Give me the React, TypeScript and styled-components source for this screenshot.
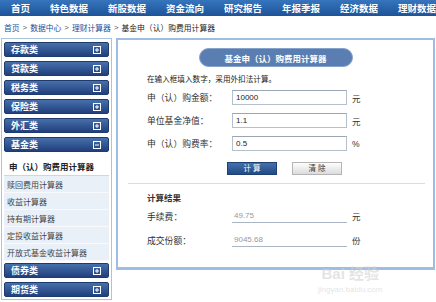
import React from 'react';
import styled, { createGlobalStyle } from 'styled-components';

const GlobalStyle = createGlobalStyle`
  body {
    margin: 0;
    background: #fff;
    font-family: "Liberation Sans", "Noto Sans CJK SC", sans-serif;
  }
`;

const navItems = ['首页', '特色数据', '新股数据', '资金流向', '研究报告', '年报季报', '经济数据', '理财数据'];
const topGroups = ['存款类', '贷款类', '税务类', '保险类', '外汇类'];
const fundItems = ['赎回费用计算器', '收益计算器', '持有期计算器', '定投收益计算器', '开放式基金收益计算器'];

const fields = [
  { label: '申（认）购金额：', value: '10000', unit: '元' },
  { label: '单位基金净值：', value: '1.1', unit: '元' },
  { label: '申（认）购费率：', value: '0.5', unit: '%' },
];

const results = [
  { label: '手续费：', value: '49.75', unit: '元' },
  { label: '成交份额：', value: '9045.68', unit: '份' },
];

const ToggleIcon = ({ open }: { open?: boolean }) => (
  <svg width="8" height="8" viewBox="0 0 8 8">
    <rect x="0.5" y="0.5" width="7" height="7" fill="none" stroke="#fff" strokeWidth="1" />
    <line x1="2" y1="4" x2="6" y2="4" stroke="#fff" strokeWidth="1" />
    {!open && <line x1="4" y1="2" x2="4" y2="6" stroke="#fff" strokeWidth="1" />}
  </svg>
);

export default function App() {
  return (
    <Page>
      <GlobalStyle />
      <TopNav>
        {navItems.map((item) => (
          <NavItem key={item}>{item}</NavItem>
        ))}
      </TopNav>

      <Breadcrumb>
        <Crumb>首页</Crumb>
        <Sep>&gt;</Sep>
        <Crumb>数据中心</Crumb>
        <Sep>&gt;</Sep>
        <Crumb>理财计算器</Crumb>
        <Sep>&gt;</Sep>
        <Current>基金申（认）购费用计算器</Current>
      </Breadcrumb>

      <Content>
        <Sidebar>
          {topGroups.map((g) => (
            <GroupBar key={g}>
              {g}
              <ToggleIcon />
            </GroupBar>
          ))}
          <GroupBar>
            基金类
            <ToggleIcon open />
          </GroupBar>
          <SubMenu>
            <SubItem active>申（认）购费用计算器</SubItem>
            {fundItems.map((item) => (
              <SubItem key={item}>{item}</SubItem>
            ))}
          </SubMenu>
          <GroupBar>
            债券类
            <ToggleIcon />
          </GroupBar>
          <GroupBar>
            期货类
            <ToggleIcon />
          </GroupBar>
        </Sidebar>

        <Panel>
          <TitlePill>基金申（认）购费用计算器</TitlePill>
          <Hint>在输入框填入数字，采用外扣法计算。</Hint>

          {fields.map((f) => (
            <FormRow key={f.label}>
              <Label>{f.label}</Label>
              <Input defaultValue={f.value} />
              <Unit>{f.unit}</Unit>
            </FormRow>
          ))}

          <ButtonRow>
            <Button primary>计 算</Button>
            <Button>清 除</Button>
          </ButtonRow>

          <Divider />

          <SectionTitle>计算结果</SectionTitle>
          {results.map((r) => (
            <ResultRow key={r.label}>
              <Label>{r.label}</Label>
              <ResultValue>{r.value}</ResultValue>
              <Unit>{r.unit}</Unit>
            </ResultRow>
          ))}
        </Panel>
      </Content>

      <Watermark>
        <WatermarkLogo>Bai 经验</WatermarkLogo>
        <WatermarkUrl>jingyan.baidu.com</WatermarkUrl>
      </Watermark>
    </Page>
  );
}

const Page = styled.div`
  position: relative;
  width: 436px;
  height: 302px;
  overflow: hidden;
`;

const TopNav = styled.div`
  display: flex;
  align-items: center;
  gap: 20px;
  height: 16px;
  padding-left: 11px;
  background: linear-gradient(#3675bd, #1d5399);
  white-space: nowrap;
`;

const NavItem = styled.span`
  color: #fff;
  font-size: 9.5px;
  font-weight: bold;
`;

const Breadcrumb = styled.div`
  display: flex;
  align-items: center;
  height: 22px;
  padding-left: 4px;
  font-size: 7.8px;
  white-space: nowrap;
`;

const Crumb = styled.span`
  color: #1d4f9a;
`;

const Sep = styled.span`
  color: #555;
  margin: 0 3px;
`;

const Current = styled.span`
  color: #222;
`;

const Content = styled.div`
  display: flex;
  align-items: flex-start;
  gap: 4px;
  padding-left: 1px;
`;

const Sidebar = styled.div`
  box-sizing: border-box;
  width: 111px;
  height: 262px;
  padding: 3px 2px;
  border: 1px solid #a9c3e1;
`;

const GroupBar = styled.div`
  box-sizing: border-box;
  display: flex;
  align-items: center;
  justify-content: space-between;
  height: 15px;
  margin-bottom: 4px;
  padding: 0 7px 0 6px;
  background: linear-gradient(#4670ab, #213f7c);
  border: 1px solid #1d3b6f;
  border-radius: 2px;
  color: #fff;
  font-size: 9px;
  font-weight: bold;

  &:last-child {
    margin-bottom: 0;
  }
`;

const SubMenu = styled.div`
  margin-bottom: 2px;
  background: #eaf0f7;
`;

const SubItem = styled.div<{ active?: boolean }>`
  box-sizing: border-box;
  display: flex;
  align-items: center;
  height: ${({ active }) => (active ? '20px' : '17px')};
  padding-left: ${({ active }) => (active ? '5px' : '3px')};
  background: ${({ active }) => (active ? '#fff' : 'transparent')};
  border-bottom: 1px solid ${({ active }) => (active ? '#c9d7e8' : '#f7f9fc')};
  color: ${({ active }) => (active ? '#222' : '#444')};
  font-size: ${({ active }) => (active ? '8.5px' : '8px')};
  font-weight: ${({ active }) => (active ? 'bold' : 'normal')};
  white-space: nowrap;
`;

const Panel = styled.div`
  box-sizing: border-box;
  width: 319px;
  height: 232px;
  border: 2px solid #9fbde2;
  border-bottom-width: 3px;
  padding-top: 8px;
`;

const TitlePill = styled.div`
  box-sizing: border-box;
  display: flex;
  align-items: center;
  justify-content: center;
  width: 154px;
  height: 19px;
  margin: 0 auto;
  background: #5a7eb1;
  border: 1px solid #86a3cb;
  border-radius: 10px;
  color: #fff;
  font-size: 8.5px;
  font-weight: bold;
`;

const Hint = styled.div`
  height: 12px;
  line-height: 12px;
  margin: 7px 0 0 29px;
  color: #222;
  font-size: 7.6px;
`;

const FormRow = styled.div`
  display: grid;
  grid-template-columns: 80px 115px auto;
  column-gap: 5px;
  align-items: center;
  height: 23px;
  padding-left: 29px;

  &:first-of-type {
    margin-top: 11px;
  }
`;

const Label = styled.span`
  color: #333;
  font-size: 8.8px;
  white-space: nowrap;
`;

const Input = styled.input`
  box-sizing: border-box;
  width: 115px;
  height: 15px;
  margin: 0;
  padding: 0 3px;
  border: 1px solid #b5c0cd;
  border-top-color: #9aa6b4;
  background: #fff;
  color: #222;
  font-family: "Liberation Sans", sans-serif;
  font-size: 8px;
  outline: none;
`;

const Unit = styled.span`
  color: #333;
  font-size: 8.5px;
`;

const ButtonRow = styled.div`
  display: flex;
  gap: 15px;
  margin: 7px 0 0 109px;
`;

const Button = styled.button<{ primary?: boolean }>`
  box-sizing: border-box;
  width: 50px;
  height: 13px;
  padding: 0;
  background: ${({ primary }) => (primary ? 'linear-gradient(#4470ac, #214b87)' : 'linear-gradient(#fdfdfd, #dcdcdc)')};
  border: 1px solid ${({ primary }) => (primary ? '#1d3f72' : '#b4b4b4')};
  color: ${({ primary }) => (primary ? '#fff' : '#333')};
  font-family: "Liberation Sans", "Noto Sans CJK SC", sans-serif;
  font-size: 7.5px;
  line-height: 11px;
`;

const Divider = styled.div`
  height: 1px;
  margin: 8px 8px 0 10px;
  background: #dcdcdc;
`;

const SectionTitle = styled.div`
  height: 12px;
  line-height: 12px;
  margin: 8px 0 0 29px;
  color: #333;
  font-size: 8.5px;
  font-weight: bold;
`;

const ResultRow = styled.div`
  display: grid;
  grid-template-columns: 80px 115px auto;
  column-gap: 5px;
  align-items: center;
  height: 24px;
  padding-left: 29px;

  &:first-of-type {
    margin-top: 4px;
  }
`;

const ResultValue = styled.span`
  box-sizing: border-box;
  height: 14px;
  line-height: 13px;
  padding-left: 2px;
  border-bottom: 1px solid #aab6c6;
  color: #999;
  font-size: 8px;
`;

const Watermark = styled.div`
  position: absolute;
  left: 318px;
  top: 262px;
  display: flex;
  flex-direction: column;
  align-items: center;
  pointer-events: none;
`;

const WatermarkLogo = styled.span`
  color: rgba(210, 210, 210, 0.6);
  font-size: 15px;
  font-weight: bold;
`;

const WatermarkUrl = styled.span`
  margin-top: 2px;
  color: rgba(215, 215, 215, 0.7);
  font-size: 8px;
`;
